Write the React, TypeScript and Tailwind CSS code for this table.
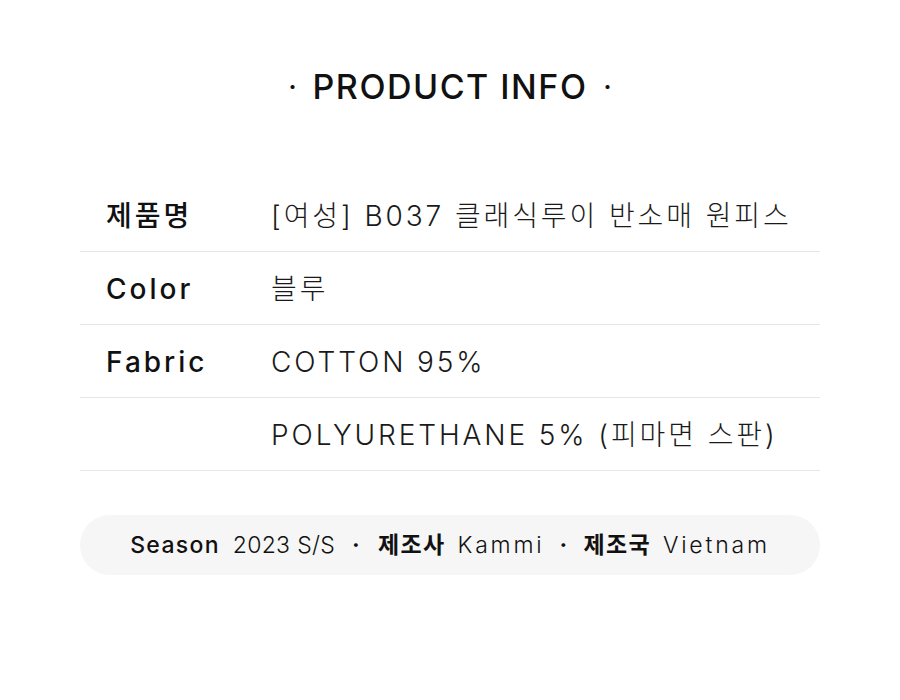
const rows = [
  { label: "제품명", value: "[여성] B037 클래식루이 반소매 원피스" },
  { label: "Color", value: "블루" },
  { label: "Fabric", value: "COTTON 95%" },
  { label: "", value: "POLYURETHANE 5% (피마면 스판)" },
];

const font = { fontFamily: "Inter, 'Noto Sans CJK KR', sans-serif" };

export default function App() {
  return (
    <div className="h-[700px] w-[900px] bg-white text-[#111]" style={font}>
      <div className="flex items-center justify-center gap-[16px] pt-[61px]">
        <span className="text-[24px] font-bold">·</span>
        <h1 className="text-[34px] font-medium tracking-[1.5px]">PRODUCT INFO</h1>
        <span className="text-[24px] font-bold">·</span>
      </div>

      <div className="mx-[80px] mt-[67px]">
        {rows.map((r, i) => (
          <div
            key={i}
            className="flex h-[73px] items-center border-b border-[#e6e6e6] px-[26px] pt-[2px]"
          >
            <div className="w-[165px] text-[28px] font-medium tracking-[3px]">{r.label}</div>
            <div className="text-[28px] font-light tracking-[2.9px] text-[#1a1a1a]">{r.value}</div>
          </div>
        ))}
      </div>

      <div className="mx-[80px] mt-[44px] flex h-[60px] items-center justify-center rounded-full bg-[#f6f6f6] text-[23px] tracking-[1.3px]">
        <span className="font-medium">Season</span>
        <span className="ml-[13px] font-light tracking-[0.3px]">2023 S/S</span>
        <span className="mx-[17px] font-bold">·</span>
        <span className="font-bold">제조사</span>
        <span className="ml-[12px] font-light tracking-[2.8px]">Kammi</span>
        <span className="mx-[15px] font-bold">·</span>
        <span className="font-bold">제조국</span>
        <span className="ml-[12px] font-light tracking-[2.8px]">Vietnam</span>
      </div>
    </div>
  );
}
